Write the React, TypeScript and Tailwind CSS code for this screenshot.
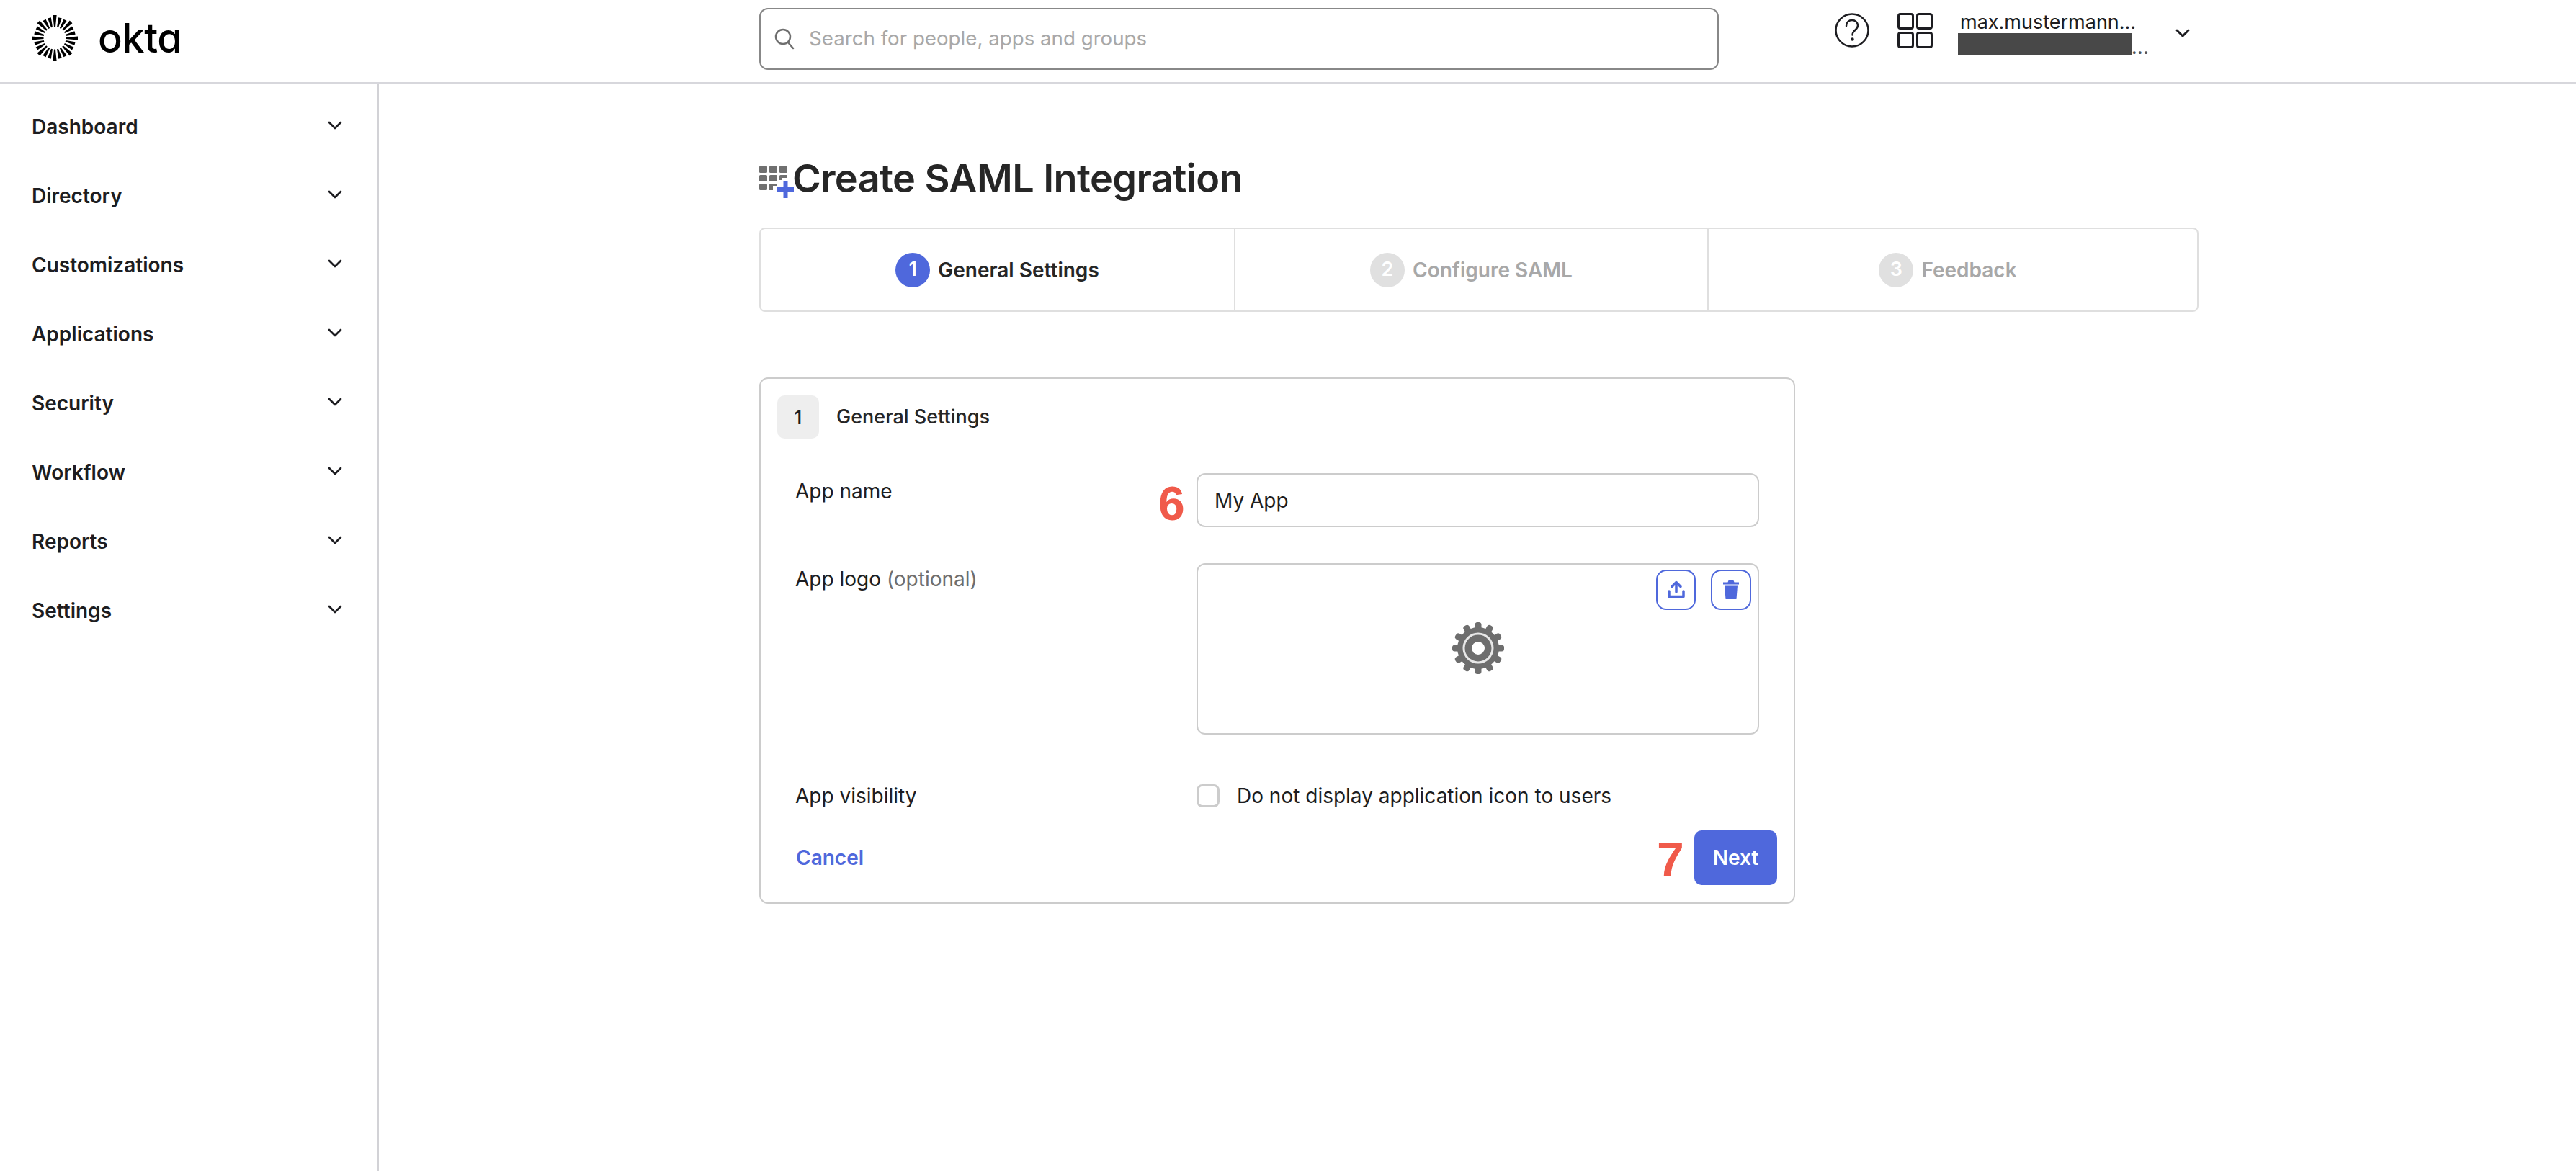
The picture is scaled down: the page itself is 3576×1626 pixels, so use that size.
import { ChevronDown } from 'lucide-react'

const navItems = ['Dashboard', 'Directory', 'Customizations', 'Applications', 'Security', 'Workflow', 'Reports', 'Settings']

const steps = [
  { n: 1, label: 'General Settings', active: true, cell: 'w-[659px]' },
  { n: 2, label: 'Configure SAML', active: false, cell: 'w-[657px]' },
  { n: 3, label: 'Feedback', active: false, cell: 'flex-1 pr-[14px]' },
]

// spokes of the sunburst, angle in degrees
const spokes = Array.from({ length: 24 }, (_, i) => i * 15)

function OktaMark() {
  return (
    <svg width="64" height="64" viewBox="-32 -32 64 64" fill="#000">
      {spokes.map((a, i) => (
        <polygon
          key={a}
          points={`-1,-15.5 1,-15.5 ${i % 3 === 0 ? 2.6 : 2.4},${i % 3 === 0 ? -32 : -29} ${i % 3 === 0 ? -2.6 : -2.4},${i % 3 === 0 ? -32 : -29}`}
          transform={`rotate(${a})`}
        />
      ))}
    </svg>
  )
}

function AppAddIcon() {
  return (
    <svg width="50" height="46" viewBox="0 0 50 46" className="mt-[16px] shrink-0">
      <g fill="#707070">
        <rect x="0" y="0" width="11" height="10" rx="1.5" />
        <rect x="14" y="0" width="11" height="10" rx="1.5" />
        <rect x="28" y="0" width="11" height="10" rx="1.5" />
        <rect x="0" y="13" width="11" height="9" rx="1.5" />
        <rect x="14" y="13" width="11" height="9" rx="1.5" />
        <path d="M28 14.5a1.5 1.5 0 0 1 1.5-1.5H39v4h-7v3h-4z" />
        <rect x="0" y="25" width="11" height="9" rx="1.5" />
        <path d="M14 26.5a1.5 1.5 0 0 1 1.5-1.5H24v3h-5v6h-5z" />
      </g>
      <rect x="25" y="30" width="23" height="6" fill="#4f68dc" />
      <rect x="33.5" y="21" width="6" height="24" fill="#4f68dc" />
    </svg>
  )
}

function GearIcon() {
  const teeth = Array.from({ length: 12 }, (_, i) => i * 30)
  return (
    <svg width="72" height="72" viewBox="-36 -36 72 72" className="mb-[2px]">
      <g fill="#6e6e6e">
        {teeth.map((a) => (
          <rect key={a} x="-4.5" y="-36" width="9" height="12" rx="3.5" transform={`rotate(${a})`} />
        ))}
        <circle r="29" />
      </g>
      <circle r="20" fill="none" stroke="#e8e8e8" strokeWidth="3" />
      <circle r="9" fill="#fff" />
    </svg>
  )
}

function UploadIcon() {
  return (
    <svg width="24" height="26" viewBox="0 0 24 26" fill="none" stroke="#4f68dc" strokeWidth="3.5" strokeLinecap="round" strokeLinejoin="round">
      <path d="M12 16V3M6 8.5 12 2.5l6 6" />
      <path d="M2 15v7.5h20V15" />
    </svg>
  )
}

function TrashIcon() {
  return (
    <svg width="22" height="26" viewBox="0 0 22 26" fill="#4f68dc">
      <path d="M7.5 0h7l1 2.5H22v3H0v-3h6.5z" />
      <path d="M2 7.5h18L18.5 26h-15z" />
    </svg>
  )
}

export default function App() {
  return (
    <div className="flex h-screen flex-col overflow-hidden bg-white font-['Inter',sans-serif] text-[#1d1d21]">
      {/* Top bar */}
      <header className="flex h-[116px] shrink-0 items-start border-b-2 border-[#d7d7dc]">
        <div className="flex w-[1054px] items-center pl-[44px] pt-[21px]">
          <OktaMark />
          <span className="ml-[28px] text-[56px] font-medium leading-[64px] tracking-[-0.5px] text-black [font-feature-settings:'cv11']">okta</span>
        </div>

        <div className="mt-[11px] flex h-[86px] w-[1332px] items-center rounded-xl border-2 border-[#888888] pl-[19px]">
          <svg width="28" height="30" viewBox="0 0 28 30" fill="none" stroke="#6e6e6e" strokeWidth="2.5" strokeLinecap="round">
            <circle cx="12" cy="12" r="10" />
            <path d="m19 20 7 8" />
          </svg>
          <span className="ml-[20px] text-[27.7px] text-[#a8a8a8]">Search for people, apps and groups</span>
        </div>

        <div className="ml-[161px] flex items-start pt-[18px]">
          <svg width="48" height="48" viewBox="0 0 48 48" fill="none" stroke="#1d1d21" strokeWidth="2.5" strokeLinecap="round">
            <circle cx="24" cy="24" r="22.5" />
            <path d="M16 18c0-5 3.5-8 8-8s8 3 8 7.5c0 6-7.5 6-7.5 13" />
            <circle cx="24.5" cy="36.5" r="1" fill="#1d1d21" />
          </svg>
          <div className="ml-[39px] grid grid-cols-2 gap-[3px]">
            <div className="size-[23px] rounded-[4px] border-[3px] border-[#1d1d21]" />
            <div className="size-[23px] rounded-[4px] border-[3px] border-[#1d1d21]" />
            <div className="size-[23px] rounded-[4px] border-[3px] border-[#1d1d21]" />
            <div className="size-[23px] rounded-[4px] border-[3px] border-[#1d1d21]" />
          </div>
          <div className="ml-[35px] w-[265px] -mt-[2px]">
            <div className="pl-[3px] text-[27px] leading-[30px]">max.mustermann...</div>
            <div className="flex items-end">
              <div className="h-[30px] w-[246px] bg-[#484848]" />
              <span className="text-[28px] leading-[22px] text-[#555]">...</span>
            </div>
          </div>
          <ChevronDown className="ml-[31px] mt-[12px] size-[32px] text-[#1d1d21]" strokeWidth={2.2} />
        </div>
      </header>

      <div className="flex flex-1">
        {/* Sidebar */}
        <aside className="w-[526px] shrink-0 border-r-2 border-[#d2d2d6] pt-[12px]">
          {navItems.map((item) => (
            <div className="flex h-[96px] items-center justify-between pl-[44px] pr-[43px]" key={item}>
              <span className="text-[28px] font-semibold">{item}</span>
              <ChevronDown className="mb-[5px] size-[32px] text-[#1d1d21]" strokeWidth={2} />
            </div>
          ))}
        </aside>

        {/* Content */}
        <main className="flex-1 pl-[528px] pr-[524px]">
          <div className="mt-[98px] flex items-start">
            <AppAddIcon />
            <h1 className="-ml-[4px] text-[54px] font-semibold leading-[68px] tracking-[-0.6px] text-[#262626]">Create SAML Integration</h1>
          </div>

          <div className="mt-[34px] flex h-[117px] w-[1998px] rounded-lg border-2 border-[#dfdfdf]">
            {steps.map((step, i) => (
              <div
                className={`flex items-center justify-center gap-[11px] ${step.cell} ${i < 2 ? 'border-r-2 border-[#dfdfdf]' : ''}`}
                key={step.n}
              >
                <div
                  className={`flex size-[48px] items-center justify-center rounded-full text-[27px] font-semibold text-white ${
                    step.active ? 'bg-[#4f68dc]' : 'bg-[#e0e0e0]'
                  }`}
                >
                  {step.n}
                </div>
                <span className={`text-[28px] font-semibold ${step.active ? 'text-[#262626]' : 'text-[#a8a8a8]'}`}>{step.label}</span>
              </div>
            ))}
          </div>

          {/* Form card */}
          <section className="mt-[91px] h-[731px] w-[1438px] rounded-xl border-2 border-[#cccccc] pl-[23px] pr-[23px] pt-[23px]">
            <div className="flex items-center">
              <div className="flex h-[60px] w-[58px] items-center justify-center rounded-[10px] bg-[#eeeeee] text-[26px] font-medium">1</div>
              <h2 className="ml-[24px] text-[27px] font-medium text-[#262626]">General Settings</h2>
            </div>

            <div className="ml-[25px] mr-[25px] mt-[48px] grid grid-cols-[557px_1fr]">
              <label className="pt-[7px] text-[28px] leading-[36px]">App name</label>
              <div className="relative flex h-[75px] items-center rounded-xl border-2 border-[#cccccc] pl-[23px] text-[28px]">
                My App
                <span className="absolute left-[-55px] top-[2px] font-['Liberation_Sans',sans-serif] text-[66px] font-bold leading-[76px] text-[#f05a4a]">6</span>
              </div>

              <label className="mt-[50px] pt-[4px] text-[28px] leading-[36px]">
                App logo <span className="text-[#6e6e6e]">(optional)</span>
              </label>
              <div className="relative mt-[50px] flex h-[238px] items-center justify-center rounded-xl border-2 border-[#cccccc]">
                <GearIcon />
                <div className="absolute right-[9px] top-[7px] flex gap-[21px]">
                  <button className="flex h-[56px] w-[55px] items-center justify-center rounded-[14px] border-2 border-[#4f68dc]">
                    <UploadIcon />
                  </button>
                  <button className="flex h-[56px] w-[56px] items-center justify-center rounded-[14px] border-2 border-[#4f68dc]">
                    <TrashIcon />
                  </button>
                </div>
              </div>

              <label className="mt-[67px] text-[28px] leading-[36px]">App visibility</label>
              <div className="mt-[67px] flex items-center">
                <div className="size-[32px] rounded-lg border-[3px] border-[#cccccc]" />
                <span className="ml-[24px] text-[28px] leading-[36px]">Do not display application icon to users</span>
              </div>
            </div>

            <div className="ml-[26px] mt-[30px] flex items-center justify-between">
              <span className="text-[28px] font-semibold text-[#4f68dc]">Cancel</span>
              <div className="relative">
                <span className="absolute left-[-52px] top-[2px] font-['Liberation_Sans',sans-serif] text-[68px] font-bold leading-[76px] text-[#f05a4a]">7</span>
                <button className="h-[76px] w-[115px] rounded-[10px] bg-[#4f68dc] text-[28px] font-semibold text-white">Next</button>
              </div>
            </div>
          </section>
        </main>
      </div>
    </div>
  )
}
